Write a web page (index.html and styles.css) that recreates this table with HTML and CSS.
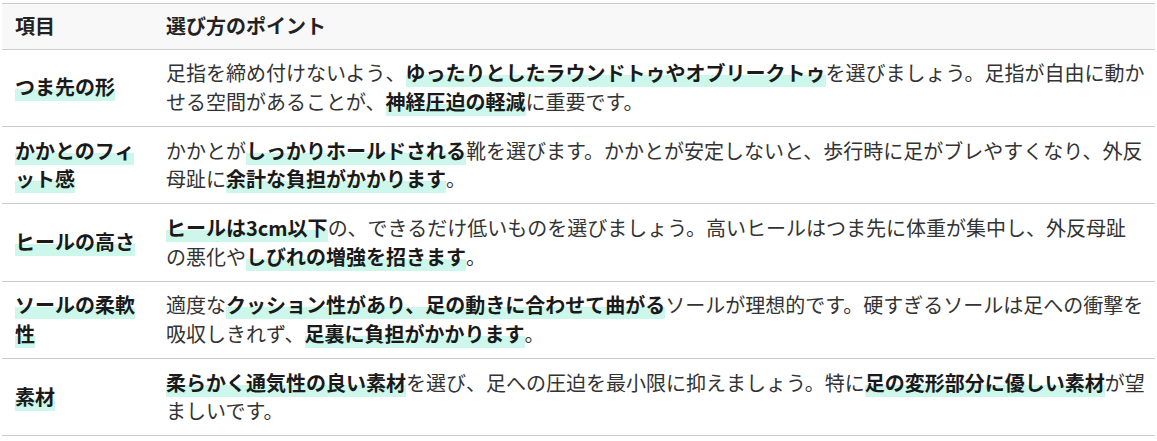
FILE: index.html
```html
<!DOCTYPE html>
<html lang="ja">
<head>
<meta charset="utf-8">
<link rel="stylesheet" href="styles.css">
</head>
<body>
<table class="points">
  <thead>
    <tr>
      <th class="col-item">項目</th>
      <th class="col-point">選び方のポイント</th>
    </tr>
  </thead>
  <tbody>
    <tr>
      <td class="item"><span class="mark">つま先の形</span></td>
      <td class="point">足指を締め付けないよう、<span class="mark">ゆったりとしたラウンドトゥやオブリークトゥ</span>を選びましょう。足指が自由に動かせる空間があることが、<span class="mark">神経圧迫の軽減</span>に重要です。</td>
    </tr>
    <tr>
      <td class="item"><span class="mark">かかとのフィット感</span></td>
      <td class="point">かかとが<span class="mark">しっかりホールドされる</span>靴を選びます。かかとが安定しないと、歩行時に足がブレやすくなり、外反母趾に<span class="mark">余計な負担がかかります</span>。</td>
    </tr>
    <tr>
      <td class="item"><span class="mark">ヒールの高さ</span></td>
      <td class="point"><span class="mark">ヒールは3cm以下</span>の、できるだけ低いものを選びましょう。高いヒールはつま先に体重が集中し、外反母趾の悪化や<span class="mark">しびれの増強を招きます</span>。</td>
    </tr>
    <tr>
      <td class="item"><span class="mark">ソールの柔軟性</span></td>
      <td class="point">適度な<span class="mark">クッション性があり、足の動きに合わせて曲がる</span>ソールが理想的です。硬すぎるソールは足への衝撃を吸収しきれず、<span class="mark">足裏に負担がかかります</span>。</td>
    </tr>
    <tr>
      <td class="item"><span class="mark">素材</span></td>
      <td class="point"><span class="mark">柔らかく通気性の良い素材</span>を選び、足への圧迫を最小限に抑えましょう。特に<span class="mark">足の変形部分に優しい素材</span>が望ましいです。</td>
    </tr>
  </tbody>
</table>
</body>
</html>
```

FILE: styles.css
```css
html, body {
  margin: 0;
  padding: 0;
  background: #ffffff;
}

body {
  padding: 3px 2px;
  font-family: "Noto Sans CJK JP", "Noto Sans", sans-serif;
  font-size: 20px;
  color: #333333;
}

.points {
  width: 100%;
  border-collapse: collapse;
  line-height: 1.43;
}

.points th {
  text-align: left;
  font-weight: 700;
  color: #222222;
  background: #f8f8f8;
  padding: 8px 13px;
  border-top: 1px solid #cccccc;
  border-bottom: 1px solid #cccccc;
}

.points td {
  padding: 9.6px 13px;
  border-bottom: 1px solid #cccccc;
  vertical-align: middle;
}

.points td.point {
  padding-right: 9px;
}

.col-item {
  width: 125px;
}

.item {
  font-weight: 700;
  color: #222222;
}

.mark {
  font-weight: 700;
  color: #1a1a1a;
  background: linear-gradient(transparent 60%, #ccf7ea 60%);
}
```
